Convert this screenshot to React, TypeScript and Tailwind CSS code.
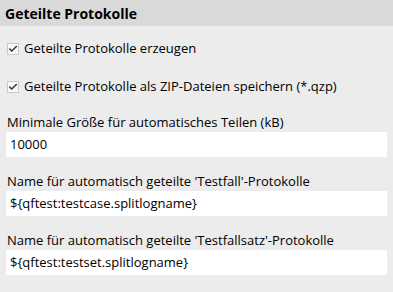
import { Check } from "lucide-react";

const font = { fontFamily: '"Open Sans", "Noto Sans", sans-serif' };

function CheckRow({ label }: { label: string }) {
  return (
    <label className="flex items-center gap-[5px] h-[20px]">
      <span className="flex items-center justify-center w-[12px] h-[12px] border border-[#c9c9c9] bg-[#f7f7f7]">
        <Check className="w-[10px] h-[10px] text-[#333]" strokeWidth={3.5} />
      </span>
      <span>{label}</span>
    </label>
  );
}

function Field({ label, value }: { label: string; value: string }) {
  return (
    <div className="flex flex-col">
      <div className="h-[20px] leading-[20px] pl-px">{label}</div>
      <div className="h-[25px] bg-white pl-[4px] flex items-center">{value}</div>
    </div>
  );
}

export default function App() {
  return (
    <div
      className="w-[393px] h-[292px] bg-[#ececec] text-[13px] text-black overflow-hidden"
      style={font}
    >
      <div className="h-[26px] bg-[#d9d9d9] px-[5px] flex items-center font-bold text-[14px]">
        Geteilte Protokolle
      </div>
      <div className="px-[6px] flex flex-col">
        <div className="pt-[13px] pl-px">
          <CheckRow label="Geteilte Protokolle erzeugen" />
        </div>
        <div className="pt-[18px] pl-px">
          <CheckRow label="Geteilte Protokolle als ZIP-Dateien speichern (*.qzp)" />
        </div>
        <div className="pt-[15px] flex flex-col gap-[14px]">
          <Field label="Minimale Größe für automatisches Teilen (kB)" value="10000" />
          <Field
            label="Name für automatisch geteilte 'Testfall'-Protokolle"
            value="${qftest:testcase.splitlogname}"
          />
          <Field
            label="Name für automatisch geteilte 'Testfallsatz'-Protokolle"
            value="${qftest:testset.splitlogname}"
          />
        </div>
      </div>
    </div>
  );
}
